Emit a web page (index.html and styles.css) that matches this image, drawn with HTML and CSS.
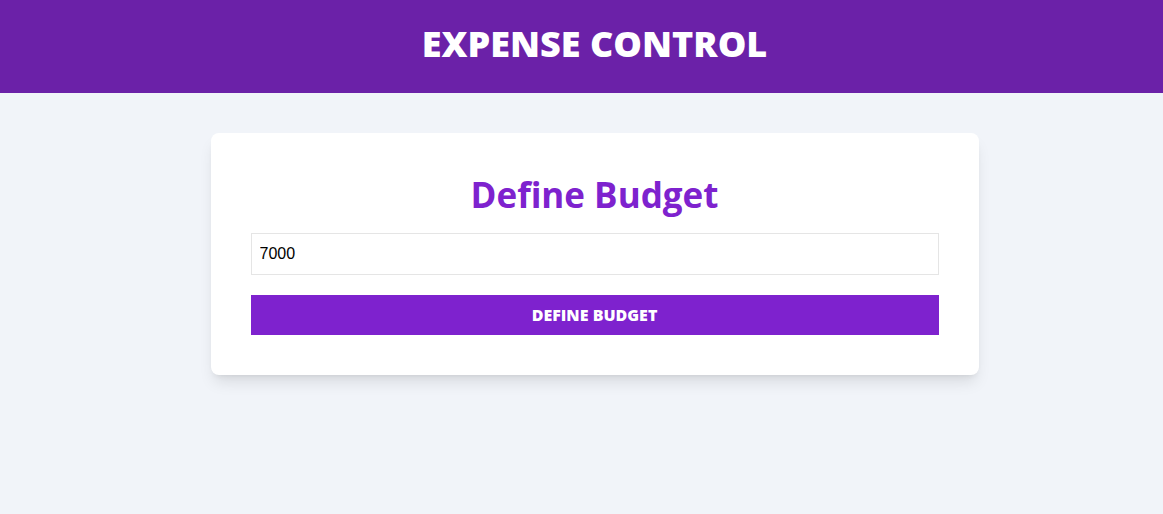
FILE: index.html
```html
<!DOCTYPE html>
<html lang="en">
<head>
<meta charset="utf-8">
<title>Expense Control</title>
<link rel="stylesheet" href="styles.css">
</head>
<body>
<header class="header">
  <h1 class="header-title">EXPENSE CONTROL</h1>
</header>
<main class="main">
  <form class="card">
    <h2 class="card-title">Define Budget</h2>
    <input class="budget-input" type="number" value="7000">
    <button class="budget-button" type="button">Define Budget</button>
  </form>
</main>
</body>
</html>
```
FILE: styles.css
```css
* { box-sizing: border-box; }
html, body { margin: 0; padding: 0; }
body {
  background: #f1f4f9;
  font-family: "Open Sans", "Liberation Sans", sans-serif;
  min-height: 514px;
}
.header {
  background: #6b21a8;
  height: 93px;
  padding-top: 24px;
  padding-left: 26px;
}
.header-title {
  margin: 0;
  text-align: center;
  color: #fff;
  font-size: 36px;
  line-height: 40px;
  font-weight: 800;
}
.main {
  padding-top: 40px;
  padding-left: 26px;
  display: flex;
  justify-content: center;
}
.card {
  width: 768px;
  background: #fff;
  border-radius: 8px;
  padding: 40px;
  box-shadow: 0 10px 15px -3px rgba(0,0,0,0.1), 0 4px 6px -4px rgba(0,0,0,0.1);
  display: flex;
  flex-direction: column;
}
.card-title {
  margin: 0 0 18px;
  padding-top: 2px;
  text-align: center;
  color: #7e22ce;
  font-size: 35px;
  line-height: 40px;
  font-weight: 700;
}
.budget-input {
  height: 42px;
  border: 1px solid #e5e5e5;
  padding: 0 8px;
  font-family: "Liberation Sans", Arial, sans-serif;
  font-size: 16px;
  color: #000;
  outline: none;
}
.budget-button {
  margin-top: 20px;
  height: 40px;
  border: 0;
  background: #7e22ce;
  color: #fff;
  text-transform: uppercase;
  font-family: "Open Sans", sans-serif;
  font-weight: 800;
  font-size: 16px;
  cursor: pointer;
}
```
